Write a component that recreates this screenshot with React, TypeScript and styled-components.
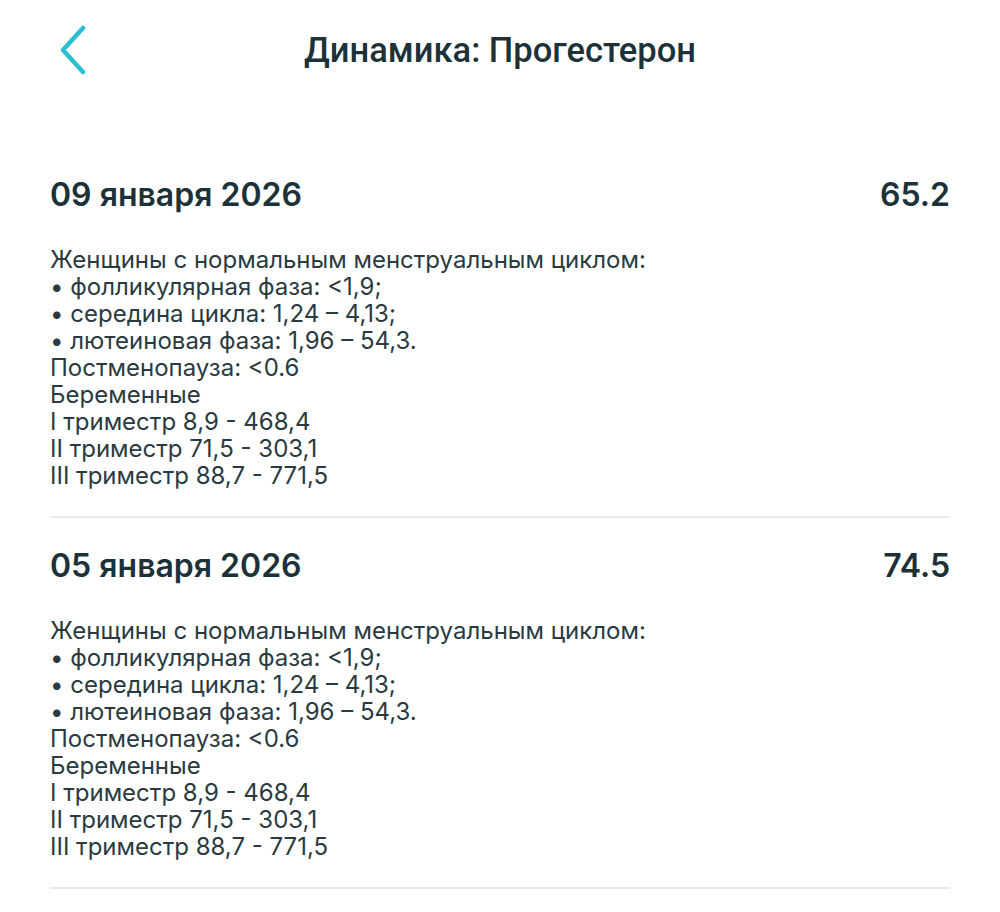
import styled, { createGlobalStyle } from 'styled-components';

const GlobalStyle = createGlobalStyle`
  html, body {
    margin: 0;
    padding: 0;
    background: #ffffff;
  }
  body {
    font-family: Inter, "Noto Sans", sans-serif;
    color: #1d3138;
  }
`;

type Result = {
  date: string;
  value: string;
};

const reference = [
  'Женщины с нормальным менструальным циклом:',
  '• фолликулярная фаза: <1,9;',
  '• середина цикла: 1,24 – 4,13;',
  '• лютеиновая фаза: 1,96 – 54,3.',
  'Постменопауза: <0.6',
  'Беременные',
  'I триместр 8,9 - 468,4',
  'II триместр 71,5 - 303,1',
  'III триместр 88,7 - 771,5',
];

const results: Result[] = [
  { date: '09 января 2026', value: '65.2' },
  { date: '05 января 2026', value: '74.5' },
];

const BackIcon = () => (
  <svg width="30" height="50" viewBox="0 0 30 50" fill="none">
    <path
      d="M25 3 L5 25 L25 47"
      stroke="#2cbfd1"
      strokeWidth="4.5"
      strokeLinecap="round"
      strokeLinejoin="round"
    />
  </svg>
);

const App = () => {
  return (
    <Page>
      <GlobalStyle />
      <Header>
        <BackButton aria-label="Назад">
          <BackIcon />
        </BackButton>
        <Title>Динамика: Прогестерон</Title>
      </Header>
      <List>
        {results.map((item) => (
          <Entry key={item.date}>
            <EntryHead>
              <EntryDate>{item.date}</EntryDate>
              <EntryValue>{item.value}</EntryValue>
            </EntryHead>
            <Norms>
              {reference.map((line) => (
                <NormLine key={line}>{line}</NormLine>
              ))}
            </Norms>
          </Entry>
        ))}
      </List>
    </Page>
  );
};

const Page = styled.div`
  width: 1000px;
  min-height: 912px;
  background: #ffffff;
`;

const Header = styled.header`
  position: relative;
  display: flex;
  align-items: center;
  justify-content: center;
  height: 100px;
`;

const BackButton = styled.button`
  position: absolute;
  left: 58px;
  top: 25px;
  display: flex;
  padding: 0;
  border: none;
  background: none;
  cursor: pointer;
`;

const Title = styled.h1`
  margin: 0;
  font-family: Roboto, "Noto Sans", sans-serif;
  font-size: 34.5px;
  font-weight: 500;
  color: #1d3138;
`;

const List = styled.div`
  display: flex;
  flex-direction: column;
  padding: 75px 50px 0;
`;

const Entry = styled.section`
  padding-bottom: 27px;
  margin-bottom: 28px;
  border-bottom: 2px solid #e9ebee;
`;

const EntryHead = styled.div`
  display: flex;
  align-items: center;
  justify-content: space-between;
`;

const EntryDate = styled.h2`
  margin: 0;
  font-size: 32px;
  font-weight: 600;
  color: #1d3138;
`;

const EntryValue = styled.span`
  font-size: 32px;
  font-weight: 600;
  color: #1d3138;
`;

const Norms = styled.div`
  margin-top: 32px;
  display: flex;
  flex-direction: column;
`;

const NormLine = styled.p`
  margin: 0;
  font-family: Inter, "Noto Sans", sans-serif;
  font-size: 24px;
  line-height: 27px;
  color: #2a3a40;
`;

export default App;
